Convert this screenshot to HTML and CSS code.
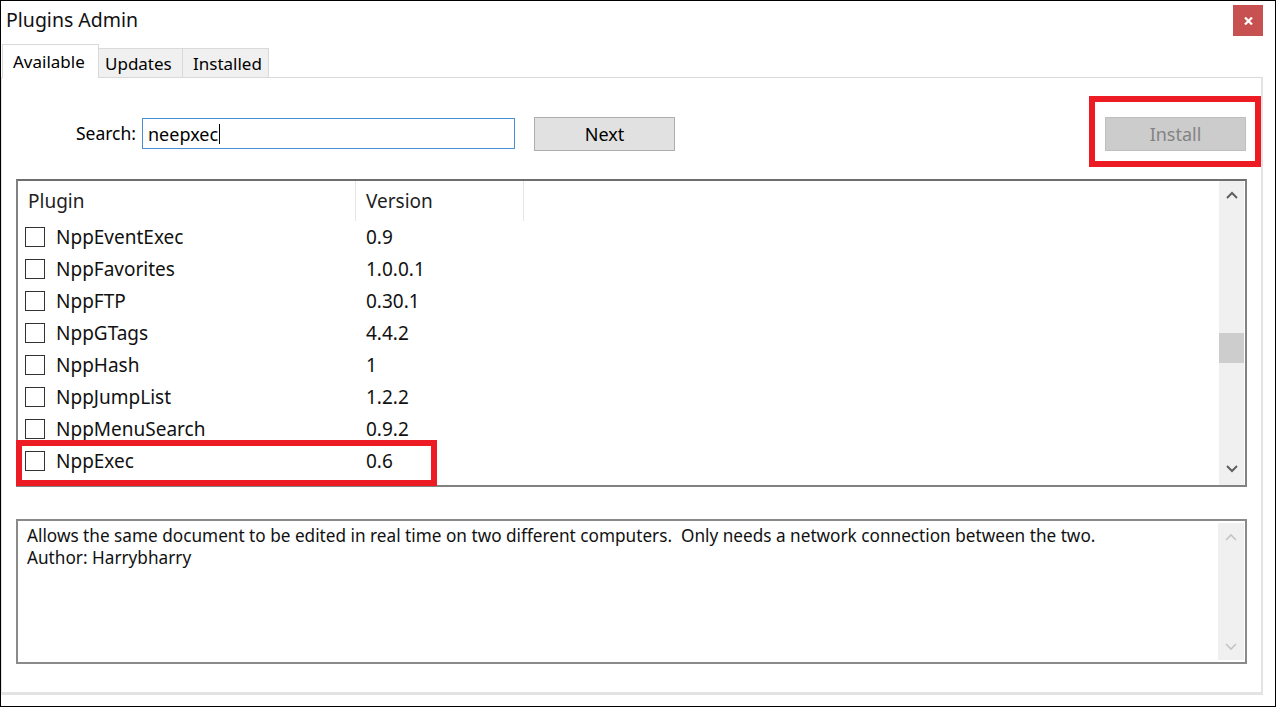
FILE: index.html
```html
<!DOCTYPE html>
<html>
<head>
<meta charset="utf-8">
<title>Plugins Admin</title>
<link rel="stylesheet" href="styles.css">
</head>
<body>
<div class="window">
  <div class="titlebar">
    <span class="title">Plugins Admin</span>
    <div class="close">
      <svg width="9" height="8" viewBox="0 0 9 8"><path d="M1 0.5 L8 7.5 M8 0.5 L1 7.5" stroke="#fff" stroke-width="2.2" fill="none"/></svg>
    </div>
  </div>
  <div class="tabs">
    <div class="tab active">Available</div>
    <div class="tab tab-updates">Updates</div>
    <div class="tab tab-installed">Installed</div>
  </div>
  <div class="panel">
    <div class="searchrow">
      <label class="search-label">Search:</label>
      <div class="search-input">neepxec<span class="caret"></span></div>
      <div class="btn next">Next</div>
      <div class="install-hl"><div class="btn install">Install</div></div>
    </div>
    <div class="list">
      <div class="list-main">
        <div class="list-header">
          <div class="col-plugin">Plugin</div>
          <div class="col-version">Version</div>
        </div>
        <div class="row"><div class="name"><span class="cb"></span>NppEventExec</div><div class="ver">0.9</div></div>
        <div class="row"><div class="name"><span class="cb"></span>NppFavorites</div><div class="ver">1.0.0.1</div></div>
        <div class="row"><div class="name"><span class="cb"></span>NppFTP</div><div class="ver">0.30.1</div></div>
        <div class="row"><div class="name"><span class="cb"></span>NppGTags</div><div class="ver">4.4.2</div></div>
        <div class="row"><div class="name"><span class="cb"></span>NppHash</div><div class="ver">1</div></div>
        <div class="row"><div class="name"><span class="cb"></span>NppJumpList</div><div class="ver">1.2.2</div></div>
        <div class="row"><div class="name"><span class="cb"></span>NppMenuSearch</div><div class="ver">0.9.2</div></div>
        <div class="row"><div class="name"><span class="cb"></span>NppExec</div><div class="ver">0.6</div></div>
      </div>
      <div class="vscroll">
        <svg class="arrow-up" width="12" height="8" viewBox="0 0 12 8"><polyline points="1,7 6,2 11,7" fill="none" stroke="#606060" stroke-width="2"/></svg>
        <div class="thumb"></div>
        <svg class="arrow-down" width="12" height="8" viewBox="0 0 12 8"><polyline points="1,1 6,6 11,1" fill="none" stroke="#606060" stroke-width="2"/></svg>
      </div>
      <div class="row-hl"></div>
    </div>
    <div class="desc">
      <div class="desc-text">Allows the same document to be edited in real time on two different computers.  Only needs a network connection between the two.
Author: Harrybharry</div>
      <div class="desc-scroll">
        <svg class="arrow-up" width="12" height="8" viewBox="0 0 12 8"><polyline points="1,7 6,2 11,7" fill="none" stroke="#c4c4c4" stroke-width="1.6"/></svg>
        <svg class="arrow-down" width="12" height="8" viewBox="0 0 12 8"><polyline points="1,1 6,6 11,1" fill="none" stroke="#c4c4c4" stroke-width="1.6"/></svg>
      </div>
    </div>
  </div>
</div>
</body>
</html>
```
FILE: styles.css
```css
* { box-sizing: border-box; }
body {
  margin: 0;
  background: #fff;
  font-family: "Noto Sans", "Open Sans", sans-serif;
  color: #000;
}
.window {
  width: 1276px;
  height: 707px;
  border: 1px solid #000;
  background: #fff;
  display: flex;
  flex-direction: column;
}
.titlebar {
  height: 43px;
  display: flex;
  align-items: flex-start;
  justify-content: space-between;
}
.title {
  font-size: 19.5px;
  line-height: 26px;
  margin-top: 6px;
  padding-left: 5px;
  color: #111;
}
.close {
  width: 30px;
  height: 31px;
  margin-top: 4px;
  margin-right: 12px;
  background: #c75050;
  display: flex;
  align-items: center;
  justify-content: center;
}
.tabs {
  height: 34px;
  display: flex;
  align-items: flex-end;
  padding-left: 1px;
  margin-bottom: -1px;
  position: relative;
  z-index: 1;
}
.tab {
  height: 29px;
  margin-bottom: 1px;
  border: 1px solid #d9d9d9;
  border-bottom: none;
  background: #f0f0f0;
  font-size: 17px;
  display: flex;
  align-items: center;
  padding-top: 1px;
}
.tab.active {
  width: 97px;
  height: 34px;
  margin-bottom: 0;
  padding-left: 10px;
  padding-top: 0;
  background: #fff;
}
.tab-updates { width: 84px; border-left: none; padding-left: 6px; }
.tab-installed { width: 86px; border-left: none; padding-left: 10px; }
.panel {
  width: 1262px;
  height: 618px;
  border-top: 1px solid #d9d9d9;
  border-left: 1px solid #e3e3e3;
  border-right: 2px solid #e3e3e3;
  border-bottom: 3px solid #e3e3e3;
  display: flex;
  flex-direction: column;
}
.searchrow {
  margin-top: 18px;
  height: 71px;
  display: flex;
  align-items: flex-start;
}
.search-label {
  width: 134px;
  margin-top: 25px;
  text-align: right;
  font-size: 17.5px;
  line-height: 24px;
}
.search-input {
  width: 373px;
  height: 31px;
  margin-left: 6px;
  margin-top: 22px;
  border: 1px solid #4a8fd4;
  padding-left: 5px;
  font-size: 18px;
  display: flex;
  align-items: center;
}
.caret {
  display: inline-block;
  width: 1px;
  height: 20px;
  margin-left: 1px;
  background: #000;
}
.btn {
  border: 1px solid #adadad;
  background: #e1e1e1;
  font-size: 18px;
  display: flex;
  align-items: center;
  justify-content: center;
}
.next {
  width: 141px;
  height: 34px;
  margin-left: 19px;
  margin-top: 21px;
}
.install-hl {
  width: 172px;
  height: 71px;
  margin-left: auto;
  border: 6px solid #ed1c24;
  padding: 15px 0 0 10px;
}
.install {
  width: 141px;
  height: 34px;
  background: #cccccc;
  border-color: #bfbfbf;
  color: #838383;
}
.list {
  position: relative;
  height: 308px;
  margin: 12px 14px 0 14px;
  border: 2px solid #828282;
  border-top-color: #6e6e6e;
  display: flex;
}
.list-main {
  flex: 1;
  overflow: hidden;
}
.list-header {
  height: 40px;
  display: flex;
  font-size: 19px;
  color: #1e1e1e;
}
.col-plugin {
  width: 338px;
  padding-left: 10px;
  border-right: 1px solid #e5e5e5;
  display: flex;
  align-items: center;
}
.col-version {
  width: 168px;
  padding-left: 10px;
  border-right: 1px solid #e5e5e5;
  display: flex;
  align-items: center;
}
.row {
  height: 32px;
  display: flex;
  align-items: center;
  font-size: 19px;
  color: #111;
}
.name {
  width: 338px;
  padding-left: 7px;
  display: flex;
  align-items: center;
}
.cb {
  width: 20px;
  height: 20px;
  margin-right: 11px;
  border: 1px solid #333;
  background: #fff;
  flex: none;
}
.ver {
  padding-left: 10px;
}
.vscroll {
  width: 25px;
  margin-right: 1px;
  background: #f0f0f0;
  display: flex;
  flex-direction: column;
  align-items: center;
}
.vscroll .arrow-up { margin-top: 10px; flex: none; }
.vscroll .thumb {
  width: 100%;
  height: 30px;
  margin-top: 134px;
  background: #cdcdcd;
}
.vscroll .arrow-down { margin-top: auto; margin-bottom: 12px; flex: none; }
.row-hl {
  position: absolute;
  left: -2px;
  top: 259px;
  width: 421px;
  height: 46px;
  border: 6px solid #ed1c24;
}
.desc {
  height: 145px;
  margin: 32px 14px 0 14px;
  border: 2px solid #8a8a8a;
  display: flex;
}
.desc-text {
  flex: 1;
  padding: 4px 0 0 9px;
  font-size: 17.2px;
  line-height: 22px;
  white-space: pre;
  color: #111;
}
.desc-scroll {
  width: 26px;
  margin: 2px 1px 2px 0;
  background: #f0f0f0;
  display: flex;
  flex-direction: column;
  align-items: center;
  justify-content: space-between;
}
.desc-scroll .arrow-up { margin-top: 10px; }
.desc-scroll .arrow-down { margin-bottom: 9px; }
```
